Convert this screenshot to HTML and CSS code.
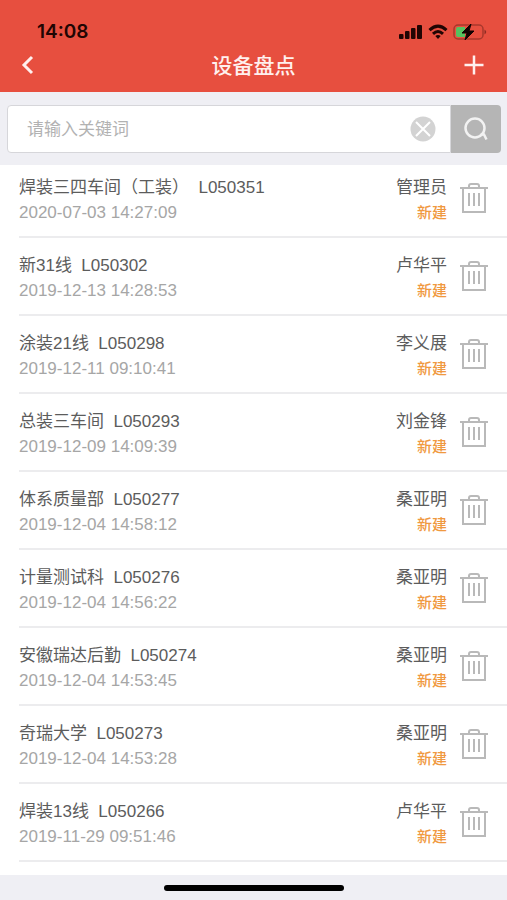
FILE: index.html
```html
<!DOCTYPE html>
<html lang="zh-CN">
<head>
    <meta charset="UTF-8">
    <meta name="viewport" content="width=device-width, initial-scale=1.0">
    <title>设备盘点</title>
    <link rel="stylesheet" href="styles.css">
</head>
<body>

    <!-- 顶部 -->
    <header class="header">
        <div class="status-bar">
            <span class="time">14:08</span>
            <div class="status-icons">
                <svg width="24" height="16" viewBox="0 0 24 16" fill="#210503">
                    <rect x="0" y="10" width="4.500" height="5" rx="1"/>
                    <rect x="6" y="7" width="4.500" height="8" rx="1"/>
                    <rect x="12" y="4" width="4.500" height="11" rx="1"/>
                    <rect x="18" y="1" width="5" height="14" rx="1"/>
                </svg>
                <svg width="20" height="16" viewBox="0 0 20 16" fill="none" stroke="#210503" stroke-width="3">
                    <path d="M1.500 6.200Q10 -1.800 18.500 6.200"/>
                    <path d="M5 9.800Q10 5.200 15 9.800"/>
                    <path d="M7.300 12Q10 10 12.700 12L10 15Z" fill="#210503" stroke="none"/>
                </svg>
                <svg width="34" height="18" viewBox="0 0 34 18">
                    <rect x="1" y="2" width="29" height="14" rx="4" fill="none" stroke="#a8382c" stroke-width="1.500"/>
                    <path d="M5 4H12V14H5Q3 14 3 12V6Q3 4 5 4Z" fill="#55c15f"/>
                    <path d="M31.500 6.500Q35 9 31.500 11.500Z" fill="#8c2d24"/>
                    <path d="M18 1L9 10H14L12 17L21 8H16Z" fill="#120302" stroke="#120302"/>
                </svg>
            </div>
        </div>
        <div class="nav-bar">
            <button class="nav-btn" type="button" aria-label="返回">
                <svg width="20" height="20" viewBox="0 0 20 20" fill="none" stroke="#fff0ee" stroke-width="3">
                    <path d="M14 2L6 10L14 18"/>
                </svg>
            </button>
            <h1 class="nav-title">设备盘点</h1>
            <button class="nav-btn" type="button" aria-label="新增">
                <svg width="20" height="20" viewBox="0 0 20 20" fill="none" stroke="#fff0ee" stroke-width="2.500">
                    <path d="M0.500 10H19.500M10 0.500V19.500"/>
                </svg>
            </button>
        </div>
    </header>

    <!-- 搜索 -->
    <form class="search">
        <input class="search-input" type="text" placeholder="请输入关键词" aria-label="关键词">
        <button class="clear-btn" type="reset" aria-label="清空">
            <svg width="26" height="26" viewBox="0 0 26 26">
                <circle cx="13" cy="13" r="12.500" fill="#d3d3d3"/>
                <path d="M6 6L20 20M20 6L6 20" stroke="#fff" stroke-width="2"/>
            </svg>
        </button>
        <button class="search-btn" type="button" aria-label="搜索">
            <svg width="26" height="26" viewBox="0 0 26 26" fill="none" stroke="#f2f2f2" stroke-width="2.500">
                <circle cx="12" cy="12" r="9.500"/>
                <path d="M17.500 18.500H21L23.500 23.500"/>
            </svg>
        </button>
    </form>

    <svg class="sprite" width="0" height="0">
        <symbol id="trash" viewBox="0 0 30 32">
            <g fill="none" stroke="#b9b9b9" stroke-width="2">
                <path d="M1 6H29M4 6V30H26V6M10 6V4Q10 2 12 2H18Q20 2 20 4V6"/>
                <path d="M10 11V24M15 11V24M20 11V24"/>
            </g>
        </symbol>
    </svg>

    <!-- 盘点列表 -->
    <ul class="list">
        <li class="item">
            <div class="info"><p class="name">焊装三四车间（工装）&nbsp; L050351</p><p class="date">2020-07-03 14:27:09</p></div>
            <div class="owner"><p class="name">管理员</p><p class="state">新建</p></div>
            <button class="delete-btn" type="button" aria-label="删除"><svg width="30" height="32"><use href="#trash"/></svg></button>
        </li>
        <li class="item">
            <div class="info"><p class="name">新31线&nbsp; L050302</p><p class="date">2019-12-13 14:28:53</p></div>
            <div class="owner"><p class="name">卢华平</p><p class="state">新建</p></div>
            <button class="delete-btn" type="button" aria-label="删除"><svg width="30" height="32"><use href="#trash"/></svg></button>
        </li>
        <li class="item">
            <div class="info"><p class="name">涂装21线&nbsp; L050298</p><p class="date">2019-12-11 09:10:41</p></div>
            <div class="owner"><p class="name">李义展</p><p class="state">新建</p></div>
            <button class="delete-btn" type="button" aria-label="删除"><svg width="30" height="32"><use href="#trash"/></svg></button>
        </li>
        <li class="item">
            <div class="info"><p class="name">总装三车间&nbsp; L050293</p><p class="date">2019-12-09 14:09:39</p></div>
            <div class="owner"><p class="name">刘金锋</p><p class="state">新建</p></div>
            <button class="delete-btn" type="button" aria-label="删除"><svg width="30" height="32"><use href="#trash"/></svg></button>
        </li>
        <li class="item">
            <div class="info"><p class="name">体系质量部&nbsp; L050277</p><p class="date">2019-12-04 14:58:12</p></div>
            <div class="owner"><p class="name">桑亚明</p><p class="state">新建</p></div>
            <button class="delete-btn" type="button" aria-label="删除"><svg width="30" height="32"><use href="#trash"/></svg></button>
        </li>
        <li class="item">
            <div class="info"><p class="name">计量测试科&nbsp; L050276</p><p class="date">2019-12-04 14:56:22</p></div>
            <div class="owner"><p class="name">桑亚明</p><p class="state">新建</p></div>
            <button class="delete-btn" type="button" aria-label="删除"><svg width="30" height="32"><use href="#trash"/></svg></button>
        </li>
        <li class="item">
            <div class="info"><p class="name">安徽瑞达后勤&nbsp; L050274</p><p class="date">2019-12-04 14:53:45</p></div>
            <div class="owner"><p class="name">桑亚明</p><p class="state">新建</p></div>
            <button class="delete-btn" type="button" aria-label="删除"><svg width="30" height="32"><use href="#trash"/></svg></button>
        </li>
        <li class="item">
            <div class="info"><p class="name">奇瑞大学&nbsp; L050273</p><p class="date">2019-12-04 14:53:28</p></div>
            <div class="owner"><p class="name">桑亚明</p><p class="state">新建</p></div>
            <button class="delete-btn" type="button" aria-label="删除"><svg width="30" height="32"><use href="#trash"/></svg></button>
        </li>
        <li class="item">
            <div class="info"><p class="name">焊装13线&nbsp; L050266</p><p class="date">2019-11-29 09:51:46</p></div>
            <div class="owner"><p class="name">卢华平</p><p class="state">新建</p></div>
            <button class="delete-btn" type="button" aria-label="删除"><svg width="30" height="32"><use href="#trash"/></svg></button>
        </li>
    </ul>

    <footer class="home-bar">
        <div class="home-indicator"></div>
    </footer>

</body>
</html>
```
FILE: styles.css
```css
* {
    margin: 0;
    padding: 0;
    box-sizing: border-box;
}

body {
    display: flex;
    flex-direction: column;
    min-height: 100vh;
    background-color: #efeff4;
    color: #5c5c5c;
    font-family: "Liberation Sans", "Noto Sans CJK SC", sans-serif;
    font-size: 17px;
    line-height: 25px;
}

button {
    border: none;
    background: none;
    cursor: pointer;
}

svg {
    display: block;
}

.sprite {
    position: absolute;
}

/* --- 顶部 --- */
.header {
    background-color: #e74f3f;
    padding-top: 19px;
    height: 92px;
}

.status-bar {
    display: flex;
    justify-content: space-between;
    align-items: center;
    padding: 0 20px 0 37px;
}

.time {
    color: #210503;
    font-family: Inter, sans-serif;
    font-size: 19px;
    font-weight: 600;
}

.status-icons {
    display: flex;
    align-items: center;
    gap: 5px;
}

.nav-bar {
    display: flex;
    justify-content: space-between;
    align-items: center;
    height: 42px;
    padding: 0 13px 0 8px;
}

.nav-btn {
    display: flex;
    align-items: center;
    justify-content: center;
    width: 40px;
    height: 40px;
}

.nav-title {
    flex: 1;
    padding-left: 5px;
    color: #fff0ee;
    font-size: 21px;
    font-weight: 500;
    text-align: center;
}

/* --- 搜索 --- */
.search {
    display: flex;
    position: relative;
    padding: 13px 6px 12px 7px;
}

.search-input {
    flex: 1;
    min-width: 0;
    height: 48px;
    padding: 2px 50px 0 19px;
    border: 1px solid #d6d6da;
    border-radius: 4px 0 0 4px;
    background-color: #fff;
    color: #5c5c5c;
    font-family: inherit;
    font-size: 17px;
}

.search-input::placeholder {
    color: #b2b2b2;
}

/* 清空按钮浮在输入框上 */
.clear-btn {
    position: absolute;
    top: 24px;
    right: 71px;
}

.search-btn {
    display: flex;
    align-items: center;
    justify-content: center;
    width: 50px;
    height: 48px;
    border-radius: 0 4px 4px 0;
    background-color: #b5b5b5;
}

/* --- 列表 --- */
.list {
    flex: 1;
    padding-left: 19px;
    background-color: #fff;
    list-style: none;
}

.item {
    display: flex;
    align-items: center;
    height: 78px;
    padding-right: 18px;
    border-bottom: 2px solid #ececee;
}

.item:first-child {
    height: 73px;
    padding-bottom: 5px;
}

.info,
.owner {
    padding-top: 4px;
}

.info {
    flex: 1;
}

.owner {
    text-align: right;
}

.date {
    color: #a6a6a6;
}

.state {
    color: #f0993f;
    font-size: 15px;
    font-weight: 500;
}

.delete-btn {
    margin-left: 12px;
}

/* --- 底部 --- */
.home-bar {
    display: flex;
    justify-content: center;
    align-items: center;
    height: 25px;
}

.home-indicator {
    width: 180px;
    height: 6px;
    border-radius: 3px;
    background-color: #000;
}
```
